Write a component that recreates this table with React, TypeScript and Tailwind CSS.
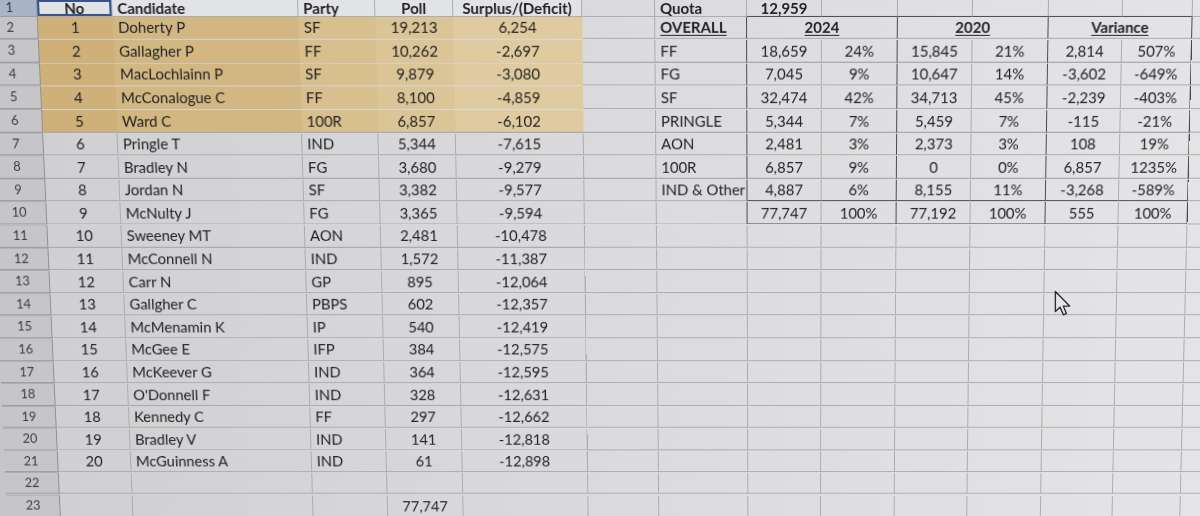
import React from "react";

type Cell = { t?: string; c?: boolean; b?: boolean; u?: boolean; span?: number };

const candidates: [string, string, string, string][] = [
  ["Doherty P", "SF", "19,213", "6,254"],
  ["Gallagher P", "FF", "10,262", "-2,697"],
  ["MacLochlainn P", "SF", "9,879", "-3,080"],
  ["McConalogue C", "FF", "8,100", "-4,859"],
  ["Ward C", "100R", "6,857", "-6,102"],
  ["Pringle T", "IND", "5,344", "-7,615"],
  ["Bradley N", "FG", "3,680", "-9,279"],
  ["Jordan N", "SF", "3,382", "-9,577"],
  ["McNulty J", "FG", "3,365", "-9,594"],
  ["Sweeney MT", "AON", "2,481", "-10,478"],
  ["McConnell N", "IND", "1,572", "-11,387"],
  ["Carr N", "GP", "895", "-12,064"],
  ["Gallgher C", "PBPS", "602", "-12,357"],
  ["McMenamin K", "IP", "540", "-12,419"],
  ["McGee E", "IFP", "384", "-12,575"],
  ["McKeever G", "IND", "364", "-12,595"],
  ["O'Donnell F", "IND", "328", "-12,631"],
  ["Kennedy C", "FF", "297", "-12,662"],
  ["Bradley V", "IND", "141", "-12,818"],
  ["McGuinness A", "IND", "61", "-12,898"],
];

const overall: string[][] = [
  ["FF", "18,659", "24%", "15,845", "21%", "2,814", "507%"],
  ["FG", "7,045", "9%", "10,647", "14%", "-3,602", "-649%"],
  ["SF", "32,474", "42%", "34,713", "45%", "-2,239", "-403%"],
  ["PRINGLE", "5,344", "7%", "5,459", "7%", "-115", "-21%"],
  ["AON", "2,481", "3%", "2,373", "3%", "108", "19%"],
  ["100R", "6,857", "9%", "0", "0%", "6,857", "1235%"],
  ["IND & Other", "4,887", "6%", "8,155", "11%", "-3,268", "-589%"],
];
const totals = ["77,747", "100%", "77,192", "100%", "555", "100%"];

const NCOLS = 15;
// row 24 is only there to fill the bottom edge under the tilt
const ROWS = Array.from({ length: 24 }, (_, i) => i + 1);

// tan fill for the top five candidates, lighter towards the right
const tanBg = ["bg-[#cfb079]", "bg-[#d3b783]", "bg-[#d8bf8e]", "bg-[#dbc596]", "bg-[#dfcb9f]"];

function buildRow(r: number): (Cell | null)[] {
  const row: (Cell | null)[] = Array.from({ length: NCOLS }, () => ({}));
  if (r === 1) {
    row[0] = { t: "No", c: true, b: true };
    row[1] = { t: "Candidate", b: true };
    row[2] = { t: "Party", b: true };
    row[3] = { t: "Poll", c: true, b: true };
    row[4] = { t: "Surplus/(Deficit)", c: true, b: true };
    row[6] = { t: "Quota", b: true };
    row[7] = { t: "12,959", c: true, b: true };
  }
  if (r >= 2 && r <= 21) {
    const [name, party, poll, surplus] = candidates[r - 2];
    row[0] = { t: String(r - 1), c: true };
    row[1] = { t: name };
    row[2] = { t: party };
    row[3] = { t: poll, c: true };
    row[4] = { t: surplus, c: true };
  }
  if (r === 2) {
    row[6] = { t: "OVERALL", b: true, u: true };
    row[7] = { t: "2024", c: true, b: true, u: true, span: 2 };
    row[8] = null;
    row[9] = { t: "2020", c: true, b: true, u: true, span: 2 };
    row[10] = null;
    row[11] = { t: "Variance", c: true, b: true, u: true, span: 2 };
    row[12] = null;
  }
  if (r >= 3 && r <= 9) {
    const [label, ...vals] = overall[r - 3];
    row[6] = { t: label };
    vals.forEach((v, i) => (row[7 + i] = { t: v, c: true }));
  }
  if (r === 10) totals.forEach((v, i) => (row[7 + i] = { t: v, c: true }));
  if (r === 23) row[3] = { t: "77,747", c: true };
  return row;
}

function cellClass(r: number, col: number, cell: Cell) {
  const last = col + (cell.span ?? 1) - 1;
  const tan = r >= 2 && r <= 6 && col <= 4;
  const inBox = r >= 2 && r <= 10;
  const darkR = inBox && (last === 6 || last === 8 || last === 10 || last === 12);
  const darkB = (r === 1 || r === 9 || r === 10) && col >= 7 && col <= 12;

  return [
    "flex whitespace-nowrap border-r border-b",
    // the photo crops row 1 at the top, so its text sits high in the cell
    r === 1 ? "items-start leading-[16px]" : "items-center overflow-hidden",
    cell.span === 2 ? "col-span-2" : "",
    cell.c ? "justify-center" : "justify-start pl-[5px]",
    cell.b ? "font-bold" : "",
    cell.u ? "underline underline-offset-2" : "",
    tan ? tanBg[col] : r === 1 && col <= 4 ? "bg-[#e2e3e6]" : "",
    darkR ? "border-r-[#4a4a4c]" : tan ? "border-r-transparent" : "border-r-[#acacae]",
    darkB ? "border-b-[#4a4a4c]" : tan && r < 6 ? "border-b-transparent" : "border-b-[#acacae]",
    r === 1 && col === 0 ? "shadow-[inset_0_0_0_2px_#34548a]" : "",
  ].join(" ");
}

function SheetRow({ r }: { r: number }) {
  const cells = buildRow(r);
  return (
    <div
      className={`grid grid-cols-[55px_75px_186px_77px_78px_129px_73px_92px_75px_76px_75px_76px_74px_70px_1fr] ${
        r === 1 ? "h-[16.6px]" : "h-[23.6px]"
      }`}
    >
      <div
        className={`flex justify-center border-r border-b border-r-[#8f8f91] border-b-[#9c9c9e] text-[13px] text-[#3c3c3e] ${
          r === 1 ? "items-start leading-[15px] bg-[#a9b4c6]" : "items-center bg-[#c6c6c8]"
        }`}
      >
        {r <= 23 ? r : ""}
      </div>
      {cells.map((cell, col) =>
        cell === null ? null : (
          <div key={col} className={cellClass(r, col, cell)}>
            {cell.t}
          </div>
        )
      )}
    </div>
  );
}

function Cursor() {
  return (
    <svg
      className="absolute left-[1054px] top-[290px]"
      width="18"
      height="28"
      viewBox="0 0 13 20"
    >
      <path
        d="M1 1 L1 15.5 L4.4 12.3 L6.8 17.8 L9 16.8 L6.7 11.5 L11.3 11.5 Z"
        fill="#e6e6e8"
        stroke="#2c2c2e"
        strokeWidth="1"
        strokeLinejoin="round"
      />
    </svg>
  );
}

export default function App() {
  return (
    <div className="relative h-[516px] w-[1200px] overflow-hidden bg-[#c6c6c8] [font-family:Lato,'Liberation_Sans',sans-serif] text-[15px] text-[#222224]">
      <div className="-ml-[18px] w-[1280px] origin-[808px_0px] bg-linear-to-r from-[#cfcfd1] via-[#dbdbdd] to-[#e5e5e7] [transform:perspective(1000px)_rotateX(-3.5deg)]">
        {ROWS.map((r) => (
          <SheetRow key={r} r={r} />
        ))}
      </div>
      <Cursor />
    </div>
  );
}
